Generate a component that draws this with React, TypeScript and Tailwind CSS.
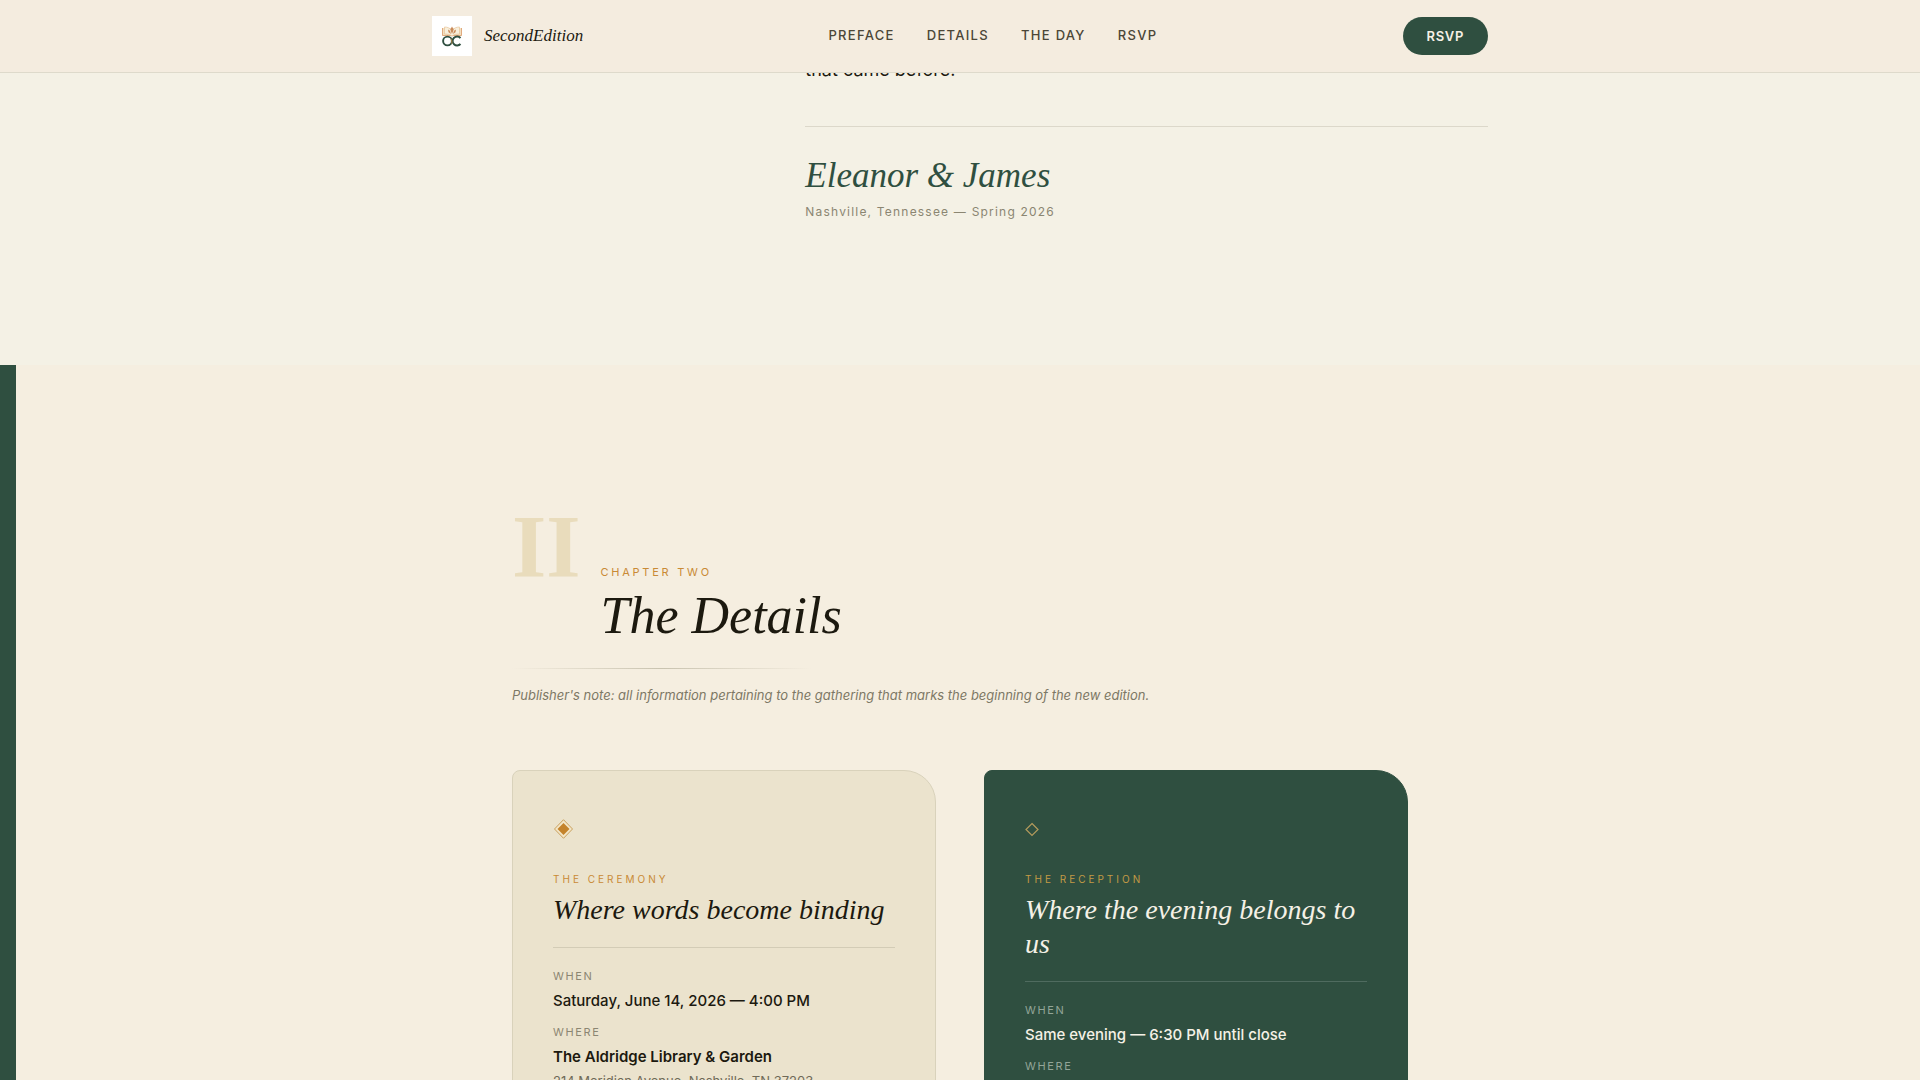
import { clsx } from "clsx";

const navLinks = [
  { label: "Preface", href: "#preface" },
  { label: "Details", href: "#details" },
  { label: "The Day", href: "#the-day" },
  { label: "RSVP", href: "#rsvp" },
];

type Item = { label: string; value: string; bold?: boolean; note?: string };

type Card = {
  kicker: string;
  title: string;
  dark?: boolean;
  items: Item[];
};

const cards: Card[] = [
  {
    kicker: "The Ceremony",
    title: "Where words become binding",
    items: [
      { label: "When", value: "Saturday, June 14, 2026 — 4:00 PM" },
      {
        label: "Where",
        value: "The Aldridge Library & Garden",
        bold: true,
        note: "214 Meridian Avenue, Nashville, TN 37203",
      },
    ],
  },
  {
    kicker: "The Reception",
    title: "Where the evening belongs to us",
    dark: true,
    items: [
      { label: "When", value: "Same evening — 6:30 PM until close" },
      { label: "Where", value: "The Aldridge Library & Garden", bold: true },
    ],
  },
];

const serif = "font-['Liberation_Serif',serif]";

// Open book over the interlocked O and C
function Logo() {
  return (
    <svg viewBox="0 0 40 40" className="size-10 bg-white" aria-hidden="true">
      <path d="M10.500 12v7.500h8.500l1 .6 1-.6h8.500V12" fill="#f3dfc0" stroke="#dda173" strokeWidth=".9" />
      <path d="M12.500 11c3 0 5.500 1 7.500 3.500 2-2.500 4.500-3.500 7.500-3.500v7c-3 0-5.500.3-7.500 2-2-1.700-4.500-2-7.500-2z" fill="#f8efdc" stroke="#e6bd8e" strokeWidth=".6" />
      <path d="M20 10.500l1.700 3-1.700 4.500-1.700-4.500zM16 13.500l2 1.300 1 3.200-2.500-1.800zM24 13.500l-2 1.300-1 3.200 2.500-1.800z" fill="#c98a5a" />
      <circle cx="15.500" cy="25" r="4.400" fill="none" stroke="#2f4f40" strokeWidth="1.900" />
      <path d="M28.500 22a4.500 4.500 0 1 0 0 6" fill="none" stroke="#2f4f40" strokeWidth="1.900" />
      <path d="M18.900 22.500c.9 1.500 1.200 3.500.8 5.200" fill="none" stroke="#b98a4a" />
    </svg>
  );
}

function Diamond({ dark }: { dark?: boolean }) {
  return dark ? (
    <svg viewBox="0 0 14 20" className="h-5 w-[14px]" aria-hidden="true">
      <path d="M7 4.500l6 6-6 6-6-6z" fill="none" stroke="#b39a5c" strokeWidth="1.200" />
    </svg>
  ) : (
    <svg viewBox="0 0 20 20" className="size-5" aria-hidden="true">
      <path d="M10.500.700l9 9.300-9 9.300-9-9.300z" fill="#f3e6c8" stroke="#c9a05c" />
      <path d="M10.500 4l6 6-6 6-6-6z" fill="#c4832b" />
    </svg>
  );
}

function DetailCard({ kicker, title, dark, items }: Card) {
  return (
    <article
      className={clsx(
        "rounded-lg rounded-tr-[32px] border p-10",
        dark ? "border-[#2f4f40] bg-[#2f4f40]" : "border-[#d9d2bb] bg-[#ebe3cd]"
      )}
    >
      <div className="mt-2 mb-8 flex h-5 items-center">
        <Diamond dark={dark} />
      </div>
      <p className={clsx("text-[10px] leading-4 tracking-[0.3em] uppercase", dark ? "text-[#c39a45]" : "text-[#c98a35]")}>
        {kicker}
      </p>
      <h3
        className={clsx(
          serif,
          "mt-[6px] border-b pb-5 text-[28px] leading-[34px] italic",
          dark ? "border-[#4f6b5f] text-[#f5f1e6]" : "border-[#d3ccb6] text-[#1c190f]"
        )}
      >
        {title}
      </h3>
      <dl className="mt-5 space-y-[11px]">
        {items.map((item) => (
          <div key={item.label}>
            <dt className={clsx("text-[11px] leading-4 tracking-[0.15em] uppercase", dark ? "text-[#93a598]" : "text-[#8b8672]")}>
              {item.label}
            </dt>
            <dd
              className={clsx(
                "mt-[5px] text-[15px] leading-6",
                item.bold ? "font-semibold" : "font-medium",
                dark ? "text-[#f5f1e6]" : "text-[#1c190f]"
              )}
            >
              {item.value}
            </dd>
            {item.note && <dd className="text-[13px] leading-6 text-[#6f6a58]">{item.note}</dd>}
          </div>
        ))}
      </dl>
    </article>
  );
}

export default function App() {
  return (
    <div className="h-screen overflow-hidden bg-[#f4f1e5] font-[Inter,sans-serif] text-[#1c190f]">
      <header className="relative z-10 border-b border-[#dedacb] bg-[#f4ecdf]">
        <div className="mx-auto flex h-[72px] max-w-[1056px] items-center justify-between">
          <a href="#top" className="flex items-center gap-3">
            <Logo />
            <span className={clsx(serif, "text-[17px] italic")}>SecondEdition</span>
          </a>
          <nav className="flex gap-8">
            {navLinks.map((link) => (
              <a
                key={link.href}
                href={link.href}
                className="text-[13px] font-medium tracking-widest text-[#4b4637] uppercase"
              >
                {link.label}
              </a>
            ))}
          </nav>
          <button
            type="button"
            className="rounded-full bg-[#2f4f40] px-6 py-[10px] text-[13px] leading-[18px] font-semibold tracking-wider text-[#f5f1e6]"
          >
            RSVP
          </button>
        </div>
      </header>

      <main>
        <section id="preface" className="mx-auto -mt-[19px] grid max-w-[1056px] grid-cols-[1fr_2fr] gap-8 pb-[143px]">
          <div className="col-start-2">
            <p className="mb-10 text-lg leading-8">that came before.</p>
            <div className="border-t border-[#dcd8ca] pt-7">
              <p className={clsx(serif, "text-[35px] leading-[42px] text-[#2f4f40] italic")}>Eleanor &amp; James</p>
              <p className="mt-[5px] text-xs leading-5 tracking-widest text-[#8b8672]">
                Nashville, Tennessee — Spring 2026
              </p>
            </div>
          </div>
        </section>

        <section id="details" className="border-l-16 border-[#2f4f40] bg-[#f5eee0] pt-[138px] pr-4 pb-32">
          <div className="mx-auto max-w-4xl">
            <div className="flex items-baseline gap-5">
              <span className={clsx(serif, "text-[88px] leading-none font-bold text-[#e9dcbc]")}>II</span>
              <div>
                <p className="text-[11px] leading-4 tracking-[0.25em] text-[#c98a35] uppercase">Chapter Two</p>
                <h2 className={clsx(serif, "mt-[6px] text-[52px] leading-[60px] italic")}>The Details</h2>
              </div>
            </div>
            <div className="mt-[22px] h-px w-[300px] bg-linear-to-r from-transparent via-[#c9c3b0] to-transparent" />
            <p className="mt-4 text-[13px] leading-[21px] text-[#7d7865] italic">
              Publisher's note: all information pertaining to the gathering that marks the beginning of the new edition.
            </p>
            <div className="mt-16 grid grid-cols-2 gap-12">
              {cards.map((card) => (
                <DetailCard key={card.kicker} {...card} />
              ))}
            </div>
          </div>
        </section>
      </main>
    </div>
  );
}
